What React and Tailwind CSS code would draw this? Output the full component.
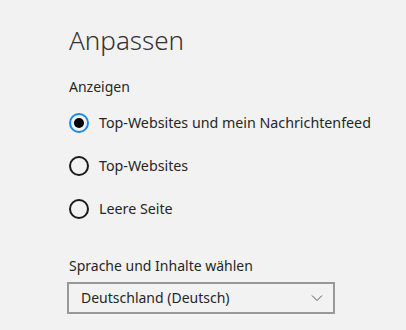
export default function App() {
  const options = [
    { label: "Top-Websites und mein Nachrichtenfeed", checked: true },
    { label: "Top-Websites", checked: false },
    { label: "Leere Seite", checked: false },
  ];
  return (
    <div
      className="w-[406px] h-[330px] bg-[#f2f2f2] text-[#262626] overflow-hidden pl-[67px] pt-[22px]"
      style={{ fontFamily: '"Noto Sans", "Open Sans", sans-serif' }}
    >
      <h1 className="text-[26px] font-light leading-[36px] text-[#333] pl-[2px]">Anpassen</h1>
      <div className="mt-[19px] text-[14px] leading-[20px] pl-[2px]">Anzeigen</div>
      <div className="mt-[16px] flex flex-col gap-[23px] pl-[2px]">
        {options.map((o) => (
          <div key={o.label} className="flex items-center gap-[10px] h-[20px]">
            {o.checked ? (
              <span className="w-[20px] h-[20px] rounded-full border-2 border-[#1e88e5] flex items-center justify-center">
                <span className="w-[10px] h-[10px] rounded-full bg-black" />
              </span>
            ) : (
              <span className="w-[20px] h-[20px] rounded-full border-2 border-[#1a1a1a]" />
            )}
            <span className="text-[14.25px] leading-[20px]">{o.label}</span>
          </div>
        ))}
      </div>
      <div className="mt-[37px] text-[14px] leading-[20px] pl-[2px]">Sprache und Inhalte wählen</div>
      <div className="mt-[6px] w-[268px] h-[32px] border-2 border-[#999] flex items-center justify-between pl-[12px] pr-[10px]">
        <span className="text-[14px] leading-[20px]">Deutschland (Deutsch)</span>
        <svg width="12" height="8" viewBox="0 0 12 8" fill="none">
          <path d="M1 1.5 L6 6.5 L11 1.5" stroke="#555" strokeWidth="1" />
        </svg>
      </div>
    </div>
  );
}
